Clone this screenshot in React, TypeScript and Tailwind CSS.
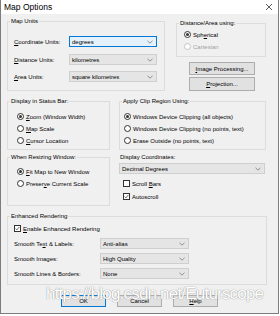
import React from "react";

const Chevron = () => (
  <svg width="6" height="4" viewBox="0 0 6 4" className="shrink-0">
    <path d="M0.5 0.8 L3 3.2 L5.5 0.8" fill="none" stroke="#777" strokeWidth="0.8" />
  </svg>
);

const Combo = ({ value, className = "", focused = false }: { value: string; className?: string; focused?: boolean }) => (
  <div
    className={`flex h-[11px] items-center justify-between border pl-[2px] pr-[3px] ${
      focused ? "border-[#0078d7] bg-[#e5f1fb]" : "border-[#cfcfcf] bg-[#e5e5e5]"
    } ${className}`}
  >
    <span>{value}</span>
    <Chevron />
  </div>
);

const Radio = ({ label, checked = false, disabled = false }: { label: React.ReactNode; checked?: boolean; disabled?: boolean }) => (
  <div className={`flex h-[11px] items-center gap-[2px] ${disabled ? "text-[#a0a0a0]" : ""}`}>
    <span
      className={`flex h-[7px] w-[7px] items-center justify-center rounded-full border bg-white ${
        disabled ? "border-[#c4c4c4]" : "border-[#333]"
      }`}
    >
      {checked && <span className="h-[3px] w-[3px] rounded-full bg-[#333]" />}
    </span>
    <span>{label}</span>
  </div>
);

const Check = ({ label, checked = false }: { label: React.ReactNode; checked?: boolean }) => (
  <div className="flex h-[11px] items-center gap-[2px]">
    <span className="flex h-[7px] w-[7px] items-center justify-center border border-[#333] bg-white">
      {checked && (
        <svg width="5" height="5" viewBox="0 0 5 5">
          <path d="M0.6 2.6 L1.9 3.9 L4.4 0.9" fill="none" stroke="#333" strokeWidth="0.7" />
        </svg>
      )}
    </span>
    <span>{label}</span>
  </div>
);

const Group = ({ title, className = "", children }: { title: string; className?: string; children?: React.ReactNode }) => (
  <div className={`relative shrink-0 border border-[#dcdcdc] ${className}`}>
    <span className="absolute left-[2px] top-[-5px] bg-[#f0f0f0] px-[1px] leading-[8px]">{title}</span>
    {children}
  </div>
);

const Btn = ({ label, className = "", def = false }: { label: React.ReactNode; className?: string; def?: boolean }) => (
  <div
    className={`flex items-center justify-center border bg-[#e1e1e1] ${
      def ? "border-[#0078d7]" : "border-[#adadad]"
    } ${className}`}
  >
    {label}
  </div>
);

export default function App() {
  return (
    <div className="relative h-[316px] w-[280px] bg-white font-['Liberation_Sans',Arial,sans-serif] text-[6px] leading-[8px] text-black">
      <div className="flex h-[314px] w-[279px] flex-col border-b border-l border-r border-[#7d7d7d]">
        {/* title bar */}
        <div className="flex h-[14px] shrink-0 items-center justify-between bg-white pl-[3px] pr-[6px]">
          <span className="text-[8.5px] leading-[10px]">Map Options</span>
          <svg width="6" height="6" viewBox="0 0 6 6">
            <path d="M0 0 L6 6 M6 0 L0 6" stroke="#333" strokeWidth="0.8" />
          </svg>
        </div>

        <div className="flex flex-1 flex-col bg-[#f0f0f0] px-[6px] pt-[7px]">
          {/* row 1 */}
          <div className="flex">
            <Group title="Map Units" className="h-[70px] w-[158px] pl-[6px] pr-[7px] pt-[14px]">
              <div className="flex items-center justify-between">
                <span>
                  <u>C</u>oordinate Units:
                </span>
                <Combo value="degrees" focused className="w-[88px]" />
              </div>
              <div className="mt-[7px] flex items-center justify-between">
                <span>
                  <u>D</u>istance Units:
                </span>
                <Combo value="kilometres" className="w-[88px]" />
              </div>
              <div className="mt-[6px] flex items-center justify-between">
                <span>
                  <u>A</u>rea Units:
                </span>
                <Combo value="square kilometres" className="w-[88px]" />
              </div>
            </Group>

            <div className="ml-[11px] flex w-[90px] flex-col">
              <Group title="Distance/Area using:" className="mt-[2px] h-[34px] pl-[7px] pt-[5px]">
                <Radio
                  checked
                  label={
                    <>
                      Sph<u>e</u>rical
                    </>
                  }
                />
                <div className="mt-[1px]">
                  <Radio label="Cartesian" disabled />
                </div>
              </Group>
              <Btn
                className="ml-[13px] mt-[5px] h-[13px] w-[66px]"
                label={
                  <span>
                    <u>I</u>mage Processing...
                  </span>
                }
              />
              <Btn
                className="ml-[13px] mt-[2px] h-[14px] w-[66px]"
                label={
                  <span>
                    <u>P</u>rojection...
                  </span>
                }
              />
            </div>
          </div>

          {/* row 2 */}
          <div className="mt-[10px] flex">
            <Group title="Display in Status Bar:" className="h-[49px] w-[103px] pl-[9px] pt-[9px]">
              <Radio
                checked
                label={
                  <>
                    <u>Z</u>oom (Window Width)
                  </>
                }
              />
              <div className="mt-[1px]">
                <Radio
                  label={
                    <>
                      <u>M</u>ap Scale
                    </>
                  }
                />
              </div>
              <div className="mt-[1px]">
                <Radio
                  label={
                    <>
                      <u>C</u>ursor Location
                    </>
                  }
                />
              </div>
            </Group>
            <Group title="Apply Clip Region Using:" className="ml-[9px] h-[49px] w-[147px] pl-[4px] pt-[9px]">
              <Radio checked label="Windows Device Clipping (all objects)" />
              <div className="mt-[1px]">
                <Radio label="Windows Device Clipping (no points, text)" />
              </div>
              <div className="mt-[1px]">
                <Radio label="Erase Outside (no points, text)" />
              </div>
            </Group>
          </div>

          {/* row 3 */}
          <div className="mt-[7px] flex">
            <Group title="When Resizing Window:" className="h-[49px] w-[103px] pl-[9px] pt-[8px]">
              <Radio
                checked
                label={
                  <>
                    <u>F</u>it Map to New Window
                  </>
                }
              />
              <div className="mt-[1px]">
                <Radio
                  label={
                    <>
                      Preser<u>v</u>e Current Scale
                    </>
                  }
                />
              </div>
            </Group>
            <div className="ml-[9px] flex w-[147px] flex-col">
              <span className="mt-[-4px] pl-[1px]">Display Coordinates:</span>
              <Combo value="Decimal Degrees" className="mt-[2px] w-[146px]" />
              <div className="ml-[4px] mt-[4px]">
                <Check
                  label={
                    <>
                      Scroll <u>B</u>ars
                    </>
                  }
                />
              </div>
              <div className="ml-[4px] mt-[2px]">
                <Check checked label="Autoscroll" />
              </div>
            </div>
          </div>

          {/* row 4 */}
          <Group title="Enhanced Rendering" className="mt-[10px] h-[69px] w-[260px] pl-[6px] pt-[6px]">
            <Check
              checked
              label={
                <>
                  <u>E</u>nable Enhanced Rendering
                </>
              }
            />
            <div className="mt-[4px] flex items-center">
              <span className="w-[86px]">
                Smooth Te<u>x</u>t &amp; Labels:
              </span>
              <Combo value="Anti-alias" className="w-[89px]" />
            </div>
            <div className="mt-[4px] flex items-center">
              <span className="w-[86px]">Smooth Images:</span>
              <Combo value="High Quality" className="w-[89px]" />
            </div>
            <div className="mt-[4px] flex items-center">
              <span className="w-[86px]">Smooth Lines &amp; Borders:</span>
              <Combo value="None" className="w-[89px]" />
            </div>
          </Group>

          {/* row 5 */}
          <div className="ml-[54px] mt-[10px] flex gap-[11px]">
            <Btn def label="OK" className="h-[12px] w-[45px]" />
            <Btn label="Cancel" className="h-[12px] w-[45px]" />
            <Btn
              label={
                <>
                  <u>H</u>elp
                </>
              }
              className="h-[12px] w-[45px]"
            />
          </div>
        </div>
      </div>

      {/* watermark over the dialog */}
      <span className="pointer-events-none absolute left-[46px] top-[284px] whitespace-nowrap text-[17px] leading-[20px] tracking-[-0.8px] text-white [text-shadow:0_0_1px_#9a9a9a,0_0_1px_#9a9a9a]">
        https://blog.csdn.net/Euturscope
      </span>
    </div>
  );
}
